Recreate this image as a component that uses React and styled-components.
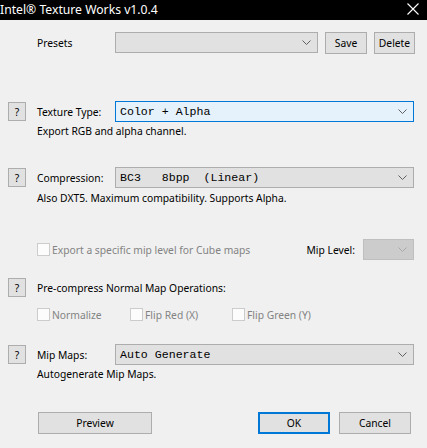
import React from 'react'
import styled, { createGlobalStyle } from 'styled-components'

const GlobalStyle = createGlobalStyle`
  body {
    margin: 0;
    background: #f0f0f0;
    font-family: "Noto Sans", "Open Sans", sans-serif;
    font-size: 10.3px;
    color: #000;
  }
`

const Chevron = ({ color = '#606060' }) => (
  <svg width="9" height="5" viewBox="0 0 9 5">
    <polyline points="0.5,0.5 4.5,4.5 8.5,0.5" fill="none" stroke={color} strokeWidth="1" />
  </svg>
)

const CloseIcon = () => (
  <svg width="12" height="12" viewBox="0 0 12 12">
    <path d="M0.5 0.5 L11.5 11.5 M11.5 0.5 L0.5 11.5" stroke="#fff" strokeWidth="1.1" />
  </svg>
)

const Combo = ({ children, focused, disabled, width }) => (
  <ComboBox $focused={focused} $disabled={disabled} $width={width}>
    <ComboText>{children}</ComboText>
    <Chevron color={disabled ? '#a8a8a8' : '#606060'} />
  </ComboBox>
)

const Check = ({ label, width }) => (
  <CheckItem $width={width}>
    <CheckBox />
    <span>{label}</span>
  </CheckItem>
)

export default function App() {
  return (
    <Window>
      <GlobalStyle />
      <TitleBar>
        <Title>Intel® Texture Works v1.0.4</Title>
        <CloseIcon />
      </TitleBar>

      <Form>
        <Row $top={12}>
          <HelpSpacer />
          <Label>Presets</Label>
          <Combo width="203px" />
          <Button $width="42px" $ml="7px">Save</Button>
          <Button $width="41px" $ml="7px">Delete</Button>
        </Row>

        <Row $top={48}>
          <HelpButton>?</HelpButton>
          <Label>Texture Type:</Label>
          <Combo focused>Color + Alpha</Combo>
        </Row>
        <Desc>Export RGB and alpha channel.</Desc>

        <Row $top={28}>
          <HelpButton>?</HelpButton>
          <Label>Compression:</Label>
          <Combo>{'BC3   8bpp  (Linear)'}</Combo>
        </Row>
        <Desc $top={3}>Also DXT5. Maximum compatibility. Supports Alpha.</Desc>

        <Row $top={33}>
          <HelpSpacer />
          <Check label="Export a specific mip level for Cube maps" />
          <MipLabel>Mip Level:</MipLabel>
          <Combo disabled width="51px" />
        </Row>

        <Row $top={17}>
          <HelpButton>?</HelpButton>
          <Heading>Pre-compress Normal Map Operations:</Heading>
        </Row>
        <CheckRow>
          <Check label="Normalize" width="93px" />
          <Check label="Flip Red (X)" width="102px" />
          <Check label="Flip Green (Y)" />
        </CheckRow>

        <Row $top={23}>
          <HelpButton>?</HelpButton>
          <Label>Mip Maps:</Label>
          <Combo>Auto Generate</Combo>
        </Row>
        <Desc>Autogenerate Mip Maps.</Desc>

        <Footer>
          <Button $width="114px">Preview</Button>
          <FooterRight>
            <Button $width="72px" $default>OK</Button>
            <Button $width="72px">Cancel</Button>
          </FooterRight>
        </Footer>
      </Form>
    </Window>
  )
}

const Window = styled.div`
  width: 427px;
  height: 448px;
  overflow: hidden;
`

const TitleBar = styled.div`
  height: 20px;
  background: #000;
  display: flex;
  align-items: center;
  justify-content: space-between;
  padding: 0 8px 2px 0;
  box-sizing: border-box;
`

const Title = styled.span`
  color: #fff;
  font-size: 12.2px;
  white-space: nowrap;
`

const Form = styled.div`
  padding: 0 13px 0 8px;
`

const Row = styled.div`
  display: flex;
  align-items: center;
  height: 21px;
  margin-top: ${({ $top }) => $top || 0}px;
`

const HelpButton = styled.div`
  width: 18px;
  height: 19px;
  box-sizing: border-box;
  flex-shrink: 0;
  background: #e1e1e1;
  border: 1px solid #adadad;
  display: flex;
  align-items: center;
  justify-content: center;
  margin-right: 11px;
`

const HelpSpacer = styled.div`
  width: 29px;
  flex-shrink: 0;
`

const Label = styled.span`
  width: 78px;
  flex-shrink: 0;
  white-space: nowrap;
`

const Heading = styled.span`
  white-space: nowrap;
`

const ComboBox = styled.div`
  display: flex;
  align-items: center;
  justify-content: space-between;
  box-sizing: border-box;
  height: 21px;
  padding: 0 6px 0 4px;
  flex: ${({ $width }) => ($width ? `0 0 ${$width}` : '1 1 auto')};
  background: ${({ $focused, $disabled }) =>
    $focused ? '#e5f1fb' : $disabled ? '#cccccc' : '#e1e1e1'};
  border: 1px solid
    ${({ $focused, $disabled }) =>
      $focused ? '#0078d7' : $disabled ? '#bfbfbf' : '#adadad'};
`

const ComboText = styled.span`
  font-family: "Liberation Mono", "DejaVu Sans Mono", monospace;
  font-size: 11.6px;
  white-space: pre;
`

const Desc = styled.div`
  margin: ${({ $top }) => $top ?? 2}px 0 0 29px;
  line-height: 15px;
`

const CheckItem = styled.label`
  display: flex;
  align-items: center;
  gap: 2px;
  color: #838383;
  white-space: nowrap;
  width: ${({ $width }) => $width || 'auto'};
  flex: ${({ $width }) => ($width ? '0 0 auto' : '1 1 auto')};
`

const CheckBox = styled.span`
  width: 13px;
  height: 13px;
  box-sizing: border-box;
  border: 1px solid #cccccc;
  background: #fcfcfc;
  flex-shrink: 0;
`

const CheckRow = styled.div`
  display: flex;
  align-items: center;
  height: 13px;
  margin: 10px 0 0 29px;
`

const MipLabel = styled.span`
  margin-right: 8px;
  white-space: nowrap;
`

const Button = styled.div`
  width: ${({ $width }) => $width};
  height: 22px;
  box-sizing: border-box;
  flex-shrink: 0;
  margin-left: ${({ $ml }) => $ml || 0};
  display: flex;
  align-items: center;
  justify-content: center;
  background: #e1e1e1;
  border: ${({ $default }) => ($default ? '2px solid #0078d7' : '1px solid #adadad')};
`

const Footer = styled.div`
  display: flex;
  justify-content: space-between;
  margin: 30px 3px 0 30px;
`

const FooterRight = styled.div`
  display: flex;
  gap: 9px;
`
